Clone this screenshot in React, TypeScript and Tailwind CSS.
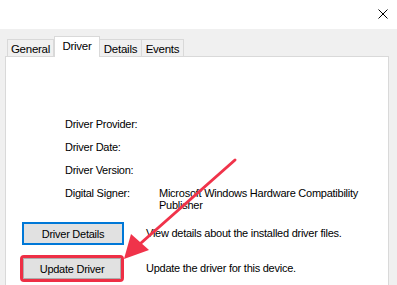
import React from 'react';

const ROWS = [
    { label: 'Driver Provider:', value: [] as string[] },
    { label: 'Driver Date:', value: [] as string[] },
    { label: 'Driver Version:', value: [] as string[] },
    { label: 'Digital Signer:', value: ['Microsoft Windows Hardware Compatibility', 'Publisher'] },
];

const TABS = [
    { name: 'General', w: 'w-[47px]' },
    { name: 'Driver', w: 'w-[46px]', active: true },
    { name: 'Details', w: 'w-[43px]' },
    { name: 'Events', w: 'w-[43px]' },
];

export default function App() {
    return (
        <div className="relative w-[397px] h-[285px] overflow-hidden bg-[#f0f0f0] text-[11px] tracking-[-0.25px] text-black font-['Liberation_Sans',Arial,sans-serif]">
            {/* title bar */}
            <div className="h-[29px] bg-white flex justify-end pt-[9px] pr-[9px]">
                <svg width="10" height="10" viewBox="0 0 10 10">
                    <path d="M0.5 0.5 L9.5 9.5 M9.5 0.5 L0.5 9.5" stroke="#000" strokeWidth="1" />
                </svg>
            </div>

            <div className="pl-[5px] pr-[8px] pt-[7px]">
                {/* tabs */}
                <div className="flex items-end h-[20px] pl-[2px]">
                    {TABS.map((t) =>
                        t.active ? (
                            <div
                                key={t.name}
                                className={`${t.w} h-[21px] -mb-px relative z-10 bg-white border border-b-0 border-[#d9d9d9] flex justify-center pt-[2px] leading-[14px] text-[11.5px]`}
                            >
                                {t.name}
                            </div>
                        ) : (
                            <div
                                key={t.name}
                                className={`${t.w} h-[17px] bg-[#f0f0f0] border border-b-0 border-[#d9d9d9] -ml-px first:ml-0 flex justify-center pt-[2px] leading-[14px] text-[11.5px]`}
                            >
                                {t.name}
                            </div>
                        )
                    )}
                </div>

                {/* panel */}
                <div className="h-[240px] bg-white border border-[#d9d9d9] pt-[60px]">
                    <div className="pl-[59px] flex flex-col">
                        {ROWS.map((r) => (
                            <div key={r.label} className="flex h-[23px] leading-[14px]">
                                <div className="w-[94px]">{r.label}</div>
                                <div className="flex flex-col leading-[12px] pt-[1px]">
                                    {r.value.map((v) => (
                                        <span key={v}>{v}</span>
                                    ))}
                                </div>
                            </div>
                        ))}
                    </div>

                    <div className="mt-[13px] pl-[16px] flex items-center">
                        <button className="w-[102px] h-[23px] border-2 border-[#0078d7] bg-[#e1e1e1] leading-[14px]">
                            Driver Details
                        </button>
                        <span className="ml-[22px]">View details about the installed driver files.</span>
                    </div>

                    <div className="mt-[10px] pl-[14px] flex items-center">
                        <div className="w-[104px] h-[27px] border-[3px] border-[#ee2f45] rounded-[4px] p-0">
                            <button className="w-full h-full border border-[#adadad] bg-[#e1e1e1] leading-[14px]">
                                Update Driver
                            </button>
                        </div>
                        <span className="ml-[22px]">Update the driver for this device.</span>
                    </div>
                </div>
            </div>

            {/* annotation arrow */}
            <svg className="absolute left-0 top-0 pointer-events-none" width="397" height="285">
                <line x1="235" y1="160" x2="141" y2="243" stroke="#f0334a" strokeWidth="3" strokeLinecap="round" />
                <polygon points="124,259 131,234 149,250" fill="#f0334a" />
            </svg>
        </div>
    );
}
